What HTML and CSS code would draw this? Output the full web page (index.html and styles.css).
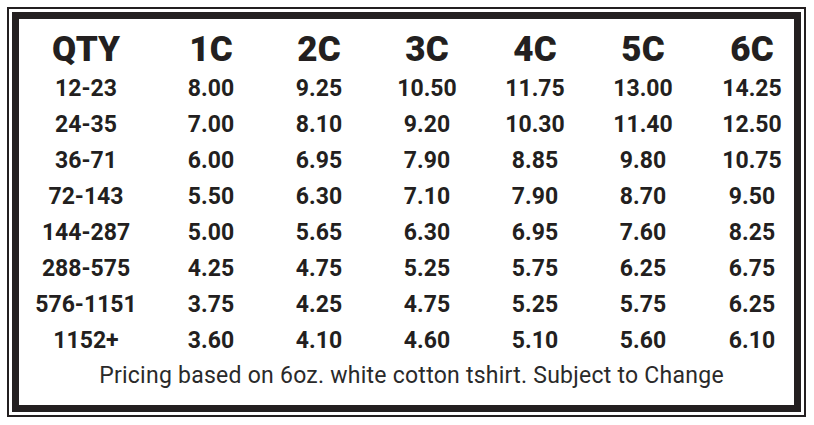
FILE: index.html
```html
<!DOCTYPE html>
<html lang="en">
<head>
<meta charset="utf-8">
<title>Pricing</title>
<link rel="stylesheet" href="styles.css">
</head>
<body>
<div class="frame">
  <div class="panel">
    <div class="grid">
      <div class="h c1">QTY</div><div class="h">1C</div><div class="h">2C</div><div class="h">3C</div><div class="h">4C</div><div class="h">5C</div><div class="h c7">6C</div>

      <div class="d c1">12-23</div><div class="d">8.00</div><div class="d">9.25</div><div class="d">10.50</div><div class="d">11.75</div><div class="d">13.00</div><div class="d c7">14.25</div>
      <div class="d c1">24-35</div><div class="d">7.00</div><div class="d">8.10</div><div class="d">9.20</div><div class="d">10.30</div><div class="d">11.40</div><div class="d c7">12.50</div>
      <div class="d c1">36-71</div><div class="d">6.00</div><div class="d">6.95</div><div class="d">7.90</div><div class="d">8.85</div><div class="d">9.80</div><div class="d c7">10.75</div>
      <div class="d c1">72-143</div><div class="d">5.50</div><div class="d">6.30</div><div class="d">7.10</div><div class="d">7.90</div><div class="d">8.70</div><div class="d c7">9.50</div>
      <div class="d c1">144-287</div><div class="d">5.00</div><div class="d">5.65</div><div class="d">6.30</div><div class="d">6.95</div><div class="d">7.60</div><div class="d c7">8.25</div>
      <div class="d c1">288-575</div><div class="d">4.25</div><div class="d">4.75</div><div class="d">5.25</div><div class="d">5.75</div><div class="d">6.25</div><div class="d c7">6.75</div>
      <div class="d c1">576-1151</div><div class="d">3.75</div><div class="d">4.25</div><div class="d">4.75</div><div class="d">5.25</div><div class="d">5.75</div><div class="d c7">6.25</div>
      <div class="d c1">1152+</div><div class="d">3.60</div><div class="d">4.10</div><div class="d">4.60</div><div class="d">5.10</div><div class="d">5.60</div><div class="d c7">6.10</div>
    </div>
    <p class="note">Pricing based on 6oz. white cotton tshirt. Subject to Change</p>
  </div>
</div>
</body>
</html>
```

FILE: styles.css
```css
html, body {
  margin: 0;
  padding: 0;
  background: #ffffff;
}

body {
  font-family: Roboto, "Liberation Sans", sans-serif;
  color: #231f20;
}

.frame {
  box-sizing: border-box;
  margin: 7px 0 0 7px;
  width: 799px;
  height: 410px;
  border: 2px solid #231f20;
  padding: 3px;
}

.panel {
  box-sizing: border-box;
  height: 100%;
  border: 7px solid #231f20;
  padding-top: 9px;
  display: flex;
  flex-direction: column;
}

.grid {
  display: grid;
  grid-template-columns: 138px repeat(5, 108px) 98px;
  text-align: center;
}

.h {
  font-weight: 900;
  font-size: 35px;
  line-height: 43px;
}

.d {
  font-weight: 700;
  font-size: 23px;
  line-height: 36px;
}

.c1 {
  padding-right: 4px;
}

.c7 {
  padding-left: 12px;
}

.note {
  margin: 0;
  text-align: center;
  font-size: 23px;
  letter-spacing: 0.25px;
  line-height: 33px;
  font-weight: 400;
  color: #2a2a2a;
  padding-left: 10px;
}
```
